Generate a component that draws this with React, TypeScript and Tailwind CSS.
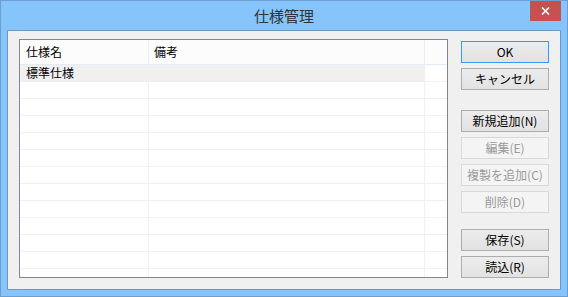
import React from "react";

function Btn({ label, mnemonic, disabled, primary }: { label: string; mnemonic?: string; disabled?: boolean; primary?: boolean }) {
  const base = "w-[88px] h-[22px] flex items-center justify-center text-[12px] leading-[14px] border";
  const cls = disabled
    ? "border-[#d9d9d9] bg-[#f4f4f4] text-[#9a9a9a]"
    : primary
    ? "border-[#3399ff] bg-gradient-to-b from-[#ececec] to-[#e2e2e2] text-black"
    : "border-[#adadad] bg-gradient-to-b from-[#ececec] to-[#e2e2e2] text-black";
  return (
    <div className={`${base} ${cls}`}>
      <span>{label}</span>
      {mnemonic && <span>{mnemonic}</span>}
    </div>
  );
}

export default function App() {
  const rows = Array.from({ length: 13 }, (_, i) => i);
  return (
    <div className="w-[568px] h-[297px] border border-[#6d9ed0] bg-[#86c5fc] flex flex-col font-['Noto_Sans_CJK_JP',sans-serif] overflow-hidden">
      {/* title bar */}
      <div className="h-[29px] grid grid-cols-[1fr_auto_1fr]">
        <div />
        <div className="self-center text-[15px] leading-[18px] text-[#333333] pt-[1px]">仕様管理</div>
        <div className="flex justify-end items-start pr-[6px]">
          <div className="w-[31px] h-[20px] bg-[#c75050] flex items-center justify-center">
            <svg width="9" height="8" viewBox="0 0 9 8">
              <path d="M1 0.5 L8 7.5 M8 0.5 L1 7.5" stroke="#ffffff" strokeWidth="1.6" />
            </svg>
          </div>
        </div>
      </div>
      {/* client */}
      <div className="mx-[6px] h-[260px] border border-[#7196c0] bg-[#f0f0f0] flex pl-[11px] pt-[8px]">
        {/* list */}
        <div className="w-[429px] h-[239px] border border-[#828790] bg-white overflow-hidden flex flex-col text-[12px] leading-[16px] text-black">
          <div className="h-[25px] shrink-0 flex border-b border-[#e3ebf7] bg-[#fcfcfc]">
            <div className="w-[128px] pl-[6px] flex items-center">仕様名</div>
            <div className="w-[1px] bg-[#e8edf3]" />
            <div className="w-[275px] pl-[5px] flex items-center">備考</div>
            <div className="w-[1px] bg-[#e8edf3]" />
            <div className="flex-1" />
          </div>
          {rows.map((i) => (
            <div key={i} className="h-[17px] shrink-0 flex border-b border-[#f0f0f0]">
              <div className={`w-[128px] pl-[6px] flex items-center ${i === 0 ? "bg-[#f0f0f0]" : ""}`}>
                {i === 0 ? "標準仕様" : ""}
              </div>
              <div className="w-[1px] bg-[#f0f0f0]" />
              <div className={`w-[275px] ${i === 0 ? "bg-[#f0f0f0]" : ""}`} />
              <div className="w-[1px] bg-[#f0f0f0]" />
              <div className="flex-1" />
            </div>
          ))}
        </div>
        {/* buttons */}
        <div className="ml-[13px] mt-[2px] flex flex-col">
          <Btn label="OK" primary />
          <div className="mt-[5px]"><Btn label="キャンセル" /></div>
          <div className="mt-[20px]"><Btn label="新規追加" mnemonic="(N)" /></div>
          <div className="mt-[5px]"><Btn label="編集" mnemonic="(E)" disabled /></div>
          <div className="mt-[5px]"><Btn label="複製を追加" mnemonic="(C)" disabled /></div>
          <div className="mt-[5px]"><Btn label="削除" mnemonic="(D)" disabled /></div>
          <div className="mt-[16px]"><Btn label="保存" mnemonic="(S)" /></div>
          <div className="mt-[5px]"><Btn label="読込" mnemonic="(R)" /></div>
        </div>
      </div>
    </div>
  );
}
